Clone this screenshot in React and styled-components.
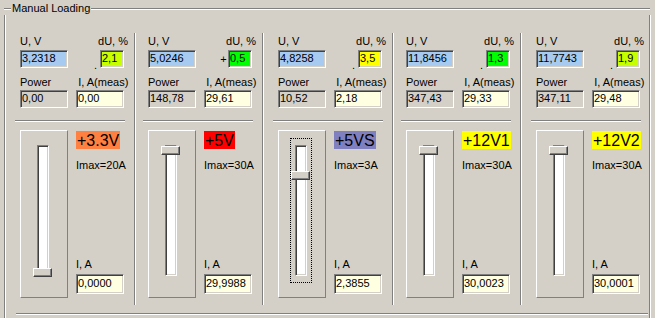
import React from "react"
import styled, { createGlobalStyle } from "styled-components"

const GlobalStyle = createGlobalStyle`
  html, body {
    margin: 0;
    padding: 0;
    background: #d4d0c8;
  }
  body {
    font-family: "Liberation Sans", Arial, sans-serif;
    font-size: 11px;
    color: #000;
  }
`

const panels = [
  { uv: "3,2318", du: "2,1", duColor: "#c8ff00", sign: ".", power: "0,00", meas: "0,00", tag: "+3.3V", tagColor: "#ff8040", imax: 20, ia: 0 },
  { uv: "5,0246", du: "0,5", duColor: "#00ff00", sign: "+", power: "148,78", meas: "29,61", tag: "+5V", tagColor: "#ff0000", imax: 30, ia: 29.9988 },
  { uv: "4,8258", du: "3,5", duColor: "#ffff00", sign: ".", power: "10,52", meas: "2,18", tag: "+5VS", tagColor: "#8080c0", imax: 3, ia: 2.3855, focused: true },
  { uv: "11,8456", du: "1,3", duColor: "#00ff00", sign: ".", power: "347,43", meas: "29,33", tag: "+12V1", tagColor: "#ffff00", imax: 30, ia: 30.0023 },
  { uv: "11,7743", du: "1,9", duColor: "#c8ff00", sign: ".", power: "347,11", meas: "29,48", tag: "+12V2", tagColor: "#ffff00", imax: 30, ia: 30.0001 },
]

const Window = styled.div`
  width: 655px;
  height: 318px;
  overflow: hidden;
  box-sizing: border-box;
  padding: 2px 0 0 4px;
  background: #d4d0c8;
`

const GroupBox = styled.div`
  width: 646px;
  display: flex;
  flex-direction: column;
`

const GroupHeader = styled.div`
  display: flex;
  align-items: center;
  height: 13px;
`

const EtchLine = styled.div`
  flex: ${(p) => (p.$grow ? "1" : "none")};
  width: ${(p) => (p.$grow ? "auto" : "7px")};
  border-top: 1px solid #808080;
  border-bottom: 1px solid #fff;
`

const GroupTitle = styled.span`
  padding: 0 1px;
  line-height: 13px;
  white-space: nowrap;
`

const GroupBody = styled.div`
  display: flex;
  flex-direction: column;
  padding: 18px 0 0 1px;
  border-left: 1px solid #808080;
  border-right: 1px solid #808080;
  box-shadow: inset 1px 0 0 #fff, 1px 0 0 #fff;
  height: 320px;
`

const PanelRow = styled.div`
  display: grid;
  grid-template-columns: 130px 128px 130px 128px 127px;
`

const Panel = styled.div`
  height: 272px;
  box-sizing: border-box;
  padding-left: ${(p) => p.$pad}px;
  display: flex;
  flex-direction: column;
  border-right: 1px solid #fff;
  box-shadow: inset -1px 0 0 #808080;

  &:last-child {
    border-right: none;
    box-shadow: none;
  }
`

const LabelRow = styled.div`
  display: flex;
  justify-content: ${(p) => (p.$spread ? "space-between" : "flex-start")};
  gap: ${(p) => (p.$spread ? "0" : "27px")};
  width: 108px;
  height: 13px;
  line-height: 13px;
  margin-top: ${(p) => p.$top}px;
  white-space: nowrap;
`

const FieldRow = styled.div`
  display: flex;
  align-items: center;
  height: 18px;
  margin-top: ${(p) => p.$top}px;
`

const Edit = styled.div`
  box-sizing: border-box;
  width: ${(p) => p.$w}px;
  height: ${(p) => p.$h || 18}px;
  padding-left: 1px;
  line-height: ${(p) => (p.$h || 18) - 4}px;
  background: ${(p) => p.$bg};
  border-top: 1px solid #808080;
  border-left: 1px solid #808080;
  border-bottom: 1px solid #fff;
  border-right: 1px solid #fff;
  box-shadow: inset 1px 1px 0 #404040, inset -1px -1px 0 #d4d0c8;
  white-space: nowrap;
  overflow: hidden;
`

const Sign = styled.span`
  width: 9px;
  margin-left: 23px;
  height: 11px;
  line-height: 11px;
  align-self: ${(p) => (p.$low ? "flex-end" : "center")};
  margin-bottom: ${(p) => (p.$low ? "-3px" : "0")};
  text-align: center;
`

const Separator = styled.div`
  width: 110px;
  margin: 12px 0 0 -5px;
  border-top: 1px solid #808080;
  border-bottom: 1px solid #fff;
`

const SliderRow = styled.div`
  display: flex;
  gap: 8px;
  margin-top: 8px;
  height: 168px;
`

const SliderFrame = styled.div`
  box-sizing: border-box;
  width: 48px;
  height: 168px;
  border-top: 1px solid #fff;
  border-left: 1px solid #fff;
  border-bottom: 1px solid #808080;
  border-right: 1px solid #808080;
  padding: 7px 0 0 11px;
`

const Track = styled.div`
  position: relative;
  width: 12px;
  height: 131px;
  padding: 6px 4px;
  border: 1px dotted ${(p) => (p.$focused ? "#000" : "transparent")};
`

const Trough = styled.div`
  box-sizing: border-box;
  width: 12px;
  height: 131px;
  background: #fff;
  border-top: 1px solid #808080;
  border-left: 1px solid #808080;
  border-bottom: 1px solid #fff;
  border-right: 1px solid #fff;
  box-shadow: inset 1px 1px 0 #404040, inset -1px -1px 0 #d4d0c8;
`

const Thumb = styled.div`
  position: absolute;
  left: 0;
  box-sizing: border-box;
  width: 19px;
  height: 9px;
  background: #d4d0c8;
  border-top: 1px solid #fff;
  border-left: 1px solid #fff;
  border-bottom: 1px solid #404040;
  border-right: 1px solid #404040;
  box-shadow: inset -1px -1px 0 #808080;
`

const InfoColumn = styled.div`
  display: flex;
  flex-direction: column;
  align-items: flex-start;
  width: 52px;
`

const Tag = styled.span`
  margin-top: 1px;
  padding: 0 1px;
  height: 18px;
  line-height: 19px;
  font-size: 16px;
  background: ${(p) => p.$bg};
  white-space: nowrap;
`

const Note = styled.span`
  line-height: 13px;
  margin-top: ${(p) => p.$top || 0}px;
  white-space: nowrap;
`

const Spacer = styled.div`
  flex: 1;
`

const BottomRule = styled.div`
  margin: 8px 0 0 10px;
  width: 632px;
  border-top: 1px solid #808080;
  border-bottom: 1px solid #fff;
`

const fmt = (v) => v.toFixed(4).replace(".", ",")

const LoadPanel = ({ p, pad }) => {
  const travel = 122
  const frac = Math.min(1, Math.max(0, p.ia / p.imax))
  const thumbTop = 7 + Math.round((1 - frac) * travel)
  return (
    <Panel $pad={pad}>
      <LabelRow $spread $top={2}>
        <span>U, V</span>
        <span>dU, %</span>
      </LabelRow>
      <FieldRow $top={2}>
        <Edit $w={48} $bg="#a6caf0">{p.uv}</Edit>
        <Sign $low={p.sign === "."}>{p.sign}</Sign>
        <Edit $w={24} $bg={p.duColor}>{p.du}</Edit>
      </FieldRow>
      <LabelRow $top={8}>
        <span>Power</span>
        <span>I, A(meas)</span>
      </LabelRow>
      <FieldRow $top={1}>
        <Edit $w={48} $bg="#d4d0c8">{p.power}</Edit>
        <Edit $w={48} $bg="#ffffe1" style={{ marginLeft: 8 }}>{p.meas}</Edit>
      </FieldRow>
      <Separator />
      <SliderRow>
        <SliderFrame>
          <Track $focused={p.focused}>
            <Trough />
            <Thumb style={{ top: thumbTop }} />
          </Track>
        </SliderFrame>
        <InfoColumn>
          <Tag $bg={p.tagColor}>{p.tag}</Tag>
          <Note $top={10}>Imax={p.imax}A</Note>
          <Spacer />
          <Note>I, A</Note>
          <Edit $w={48} $h={20} $bg="#ffffe1" style={{ marginTop: 3, marginBottom: 4 }}>
            {fmt(p.ia)}
          </Edit>
        </InfoColumn>
      </SliderRow>
    </Panel>
  )
}

const App = () => (
  <Window>
    <GlobalStyle />
    <GroupBox>
      <GroupHeader>
        <EtchLine />
        <GroupTitle>Manual Loading</GroupTitle>
        <EtchLine $grow />
      </GroupHeader>
      <GroupBody>
        <PanelRow>
          {panels.map((p, i) => (
            <LoadPanel key={p.tag} p={p} pad={i % 2 === 0 ? 14 : 12} />
          ))}
        </PanelRow>
        <BottomRule />
      </GroupBody>
    </GroupBox>
  </Window>
)

export default App
